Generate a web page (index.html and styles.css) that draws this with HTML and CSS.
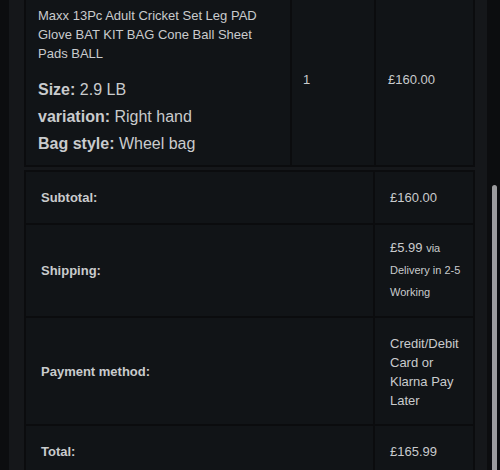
FILE: index.html
```html
<!DOCTYPE html>
<html lang="en">
<head>
  <meta charset="UTF-8">
  <title>Order details</title>
  <link rel="stylesheet" href="styles.css">
</head>
<body>

<div class="page">
  <div class="panel">
    <table class="items">
      <tr>
        <td class="product">
          <div class="product-name">Maxx 13Pc Adult Cricket Set Leg PAD Glove BAT KIT BAG Cone Ball Sheet Pads BALL</div>
          <div class="attrs">
            <p><b>Size:</b> 2.9 LB</p>
            <p><b>variation:</b> Right hand</p>
            <p><b>Bag style:</b> Wheel bag</p>
          </div>
        </td>
        <td class="qty">1</td>
        <td class="price">£160.00</td>
      </tr>
    </table>

    <table class="totals">
      <tr class="row-sub">
        <th>Subtotal:</th>
        <td>£160.00</td>
      </tr>
      <tr class="row-ship">
        <th>Shipping:</th>
        <td>£5.99 <small>via Delivery in 2-5 Working</small></td>
      </tr>
      <tr class="row-pay">
        <th>Payment method:</th>
        <td>Credit/Debit Card or Klarna Pay Later</td>
      </tr>
      <tr class="row-total">
        <th>Total:</th>
        <td>£165.99</td>
      </tr>
    </table>
  </div>
</div>

<div class="scrollbar"></div>

</body>
</html>
```

FILE: styles.css
```css
html, body {
  margin: 0;
  background: #0c0d0f;
  overflow: hidden;
  font-family: 'Liberation Sans', Arial, sans-serif;
  color: #c9cbcd;
}
.page {
  padding-left: 9px;
  width: 478px;
}
.panel {
  background: #15171a;
  padding: 0 12px 20px 15px;
}
table {
  width: 451px;
  border-collapse: collapse;
  table-layout: fixed;
}
td, th {
  background: #111417;
  border: 2px solid #0b0c0e;
  font-size: 13px;
  text-align: left;
}
.items td {
  border-top: none;
}
.items .product {
  width: 238px;
  padding: 6px 14px 8px 12px;
}
.items .qty {
  width: 71px;
  padding: 0 0 7px 11px;
  vertical-align: middle;
}
.items .price {
  padding: 0 0 7px 12px;
  vertical-align: middle;
}
.product-name {
  line-height: 19px;
}
.attrs {
  margin-top: 13px;
  font-size: 16px;
  line-height: 27px;
}
.attrs p {
  margin: 0;
}
.totals {
  margin-top: 3px;
}
.totals th {
  width: 332px;
  padding: 0 0 0 15px;
  font-weight: bold;
}
.totals td {
  padding: 15px 10px 15px 15px;
  line-height: 19px;
}
.row-sub th, .row-sub td, .row-total th, .row-total td {
  height: 19px;
  padding-top: 16px;
  padding-bottom: 16px;
}
.row-ship td {
  line-height: 21px;
  padding-top: 12px;
  padding-bottom: 13px;
}
.row-ship small {
  font-size: 11px;
}
.row-pay td {
  padding-top: 16px;
  padding-bottom: 14px;
}
.scrollbar {
  position: absolute;
  top: 185px;
  right: 3px;
  width: 5px;
  height: 300px;
  border-radius: 3px;
  background: #9c9c9e;
}
```
